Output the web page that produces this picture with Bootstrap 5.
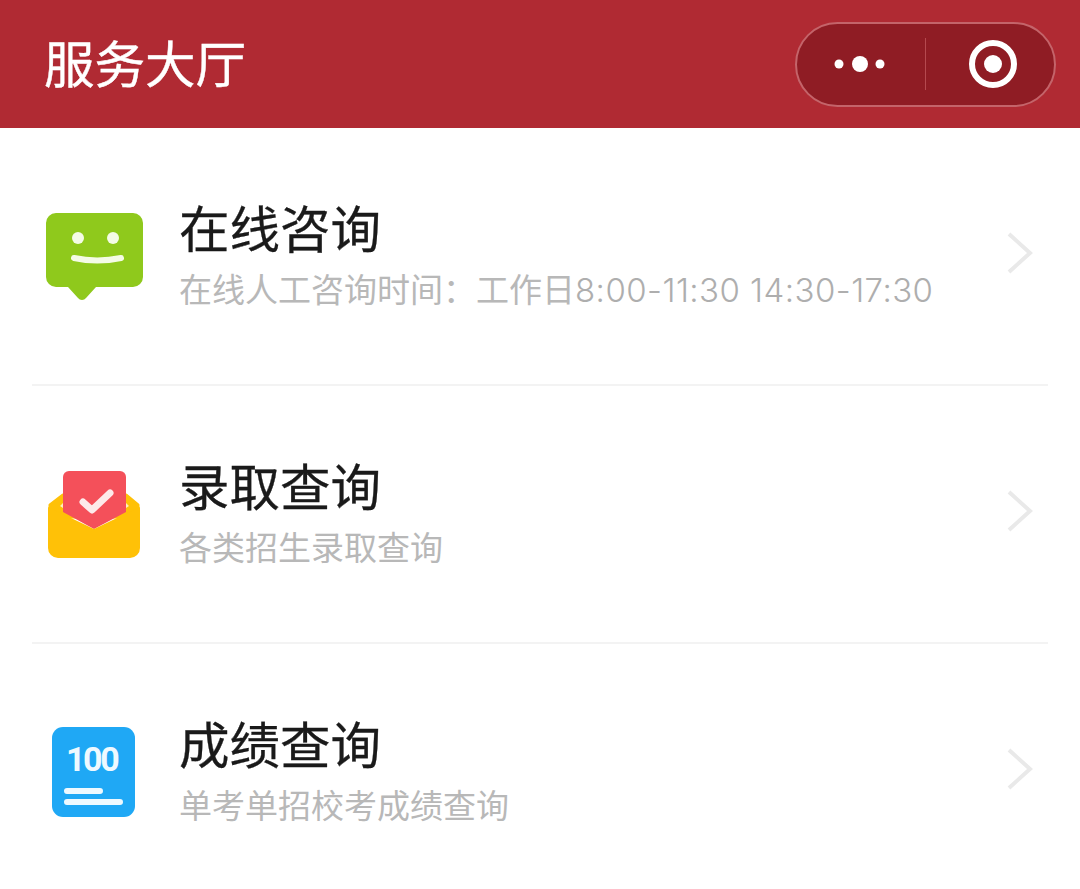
<!DOCTYPE html>
<html lang="zh-CN">
<head>
  <meta charset="UTF-8" />
  <meta name="viewport" content="width=device-width, initial-scale=1.0"/>
  <title>服务大厅</title>
  <link rel="stylesheet" href="https://cdn.jsdelivr.net/npm/bootstrap@5.3.0/dist/css/bootstrap.min.css"/>
  <style>
    body {
      background: #fff;
      font-family: Inter, "Noto Sans CJK SC", sans-serif;
      overflow: hidden;
    }

    .hall-bar {
      height: 128px;
      padding: 0 24px 0 44px;
      background: #b02a33;
      color: #fff;
    }

    .hall-bar h1 {
      font-size: 50.5px;
      font-weight: 400;
      line-height: 1;
      margin: 2px 0 0;
      -webkit-text-stroke: 0.4px #fff;
    }

    .capsule {
      width: 261px;
      height: 85px;
      background: #8f1c24;
      border: 2px solid #c4646a;
      border-radius: 43px;
    }

    .capsule-btn { flex: 1; }
    .capsule-btn-more { flex: 0 0 128px; padding-right: 2px; }
    .capsule-btn-close { padding-left: 6px; }
    .capsule-rule { width: 1px; height: 52px; background: #b5494f; }

    .svc-row {
      height: 258px;
      margin: 0 32px;
      padding-left: 12px;
      border-bottom: 2px solid #f3f3f3;
    }

    .svc-row:last-child { height: 256px; border-bottom: 0; }
    .svc-icon { width: 104px; height: 100px; margin-right: 31px; }

    .svc-title {
      font-size: 50.5px;
      line-height: 60px;
      color: #1a1a1a;
      -webkit-text-stroke: 0.3px #1a1a1a;
    }

    .svc-note {
      font-size: 33px;
      line-height: 44px;
      margin-top: 8px;
      color: #b8b8b8;
    }

    .svc-hours { font-weight: 300; letter-spacing: 0.45px; color: #aeaeae; }
    .svc-arrow { width: 30px; height: 44px; margin: 0 14px 6px 0; }
  </style>
</head>
<body>
  <header class="hall-bar d-flex align-items-center justify-content-between">
    <h1>服务大厅</h1>
    <div class="capsule d-flex align-items-center">
      <div class="capsule-btn capsule-btn-more d-flex justify-content-center">
        <svg width="60" height="20" viewBox="0 0 60 20"><g fill="#fff"><circle cx="9" cy="10" r="4.5"/><circle cx="30" cy="10" r="8"/><circle cx="50" cy="10" r="4.5"/></g></svg>
      </div>
      <div class="capsule-rule"></div>
      <div class="capsule-btn capsule-btn-close d-flex justify-content-center">
        <svg width="54" height="54" viewBox="0 0 54 54"><circle cx="27" cy="27" r="21" fill="none" stroke="#fff" stroke-width="6"/><circle cx="27" cy="27" r="9" fill="#fff"/></svg>
      </div>
    </div>
  </header>

  <main>
    <div class="svc-row d-flex align-items-center">
      <!-- speech bubble with a smile -->
      <svg class="svc-icon flex-shrink-0" viewBox="44 206 104 100">
        <path d="M56 213h77a10 10 0 0 1 10 10v54a10 10 0 0 1-10 10H96l-10 11a5 5 0 0 1-8 0l-10-11H56a10 10 0 0 1-10-10v-54a10 10 0 0 1 10-10z" fill="#8fc91c"/>
        <circle cx="78" cy="238" r="6" fill="#f4fbe6"/>
        <circle cx="113" cy="238" r="6" fill="#f4fbe6"/>
        <path d="M74 258q23 5 47 0" fill="none" stroke="#f4fbe6" stroke-width="6" stroke-linecap="round"/>
      </svg>
      <div class="flex-grow-1">
        <div class="svc-title">在线咨询</div>
        <div class="svc-note">在线人工咨询时间：工作日<span class="svc-hours">8:00-11:30 14:30-17:30</span></div>
      </div>
      <svg class="svc-arrow flex-shrink-0" viewBox="0 0 30 44"><path d="M5 3l21 19L5 41" fill="none" stroke="#e9e9e9" stroke-width="4"/></svg>
    </div>

    <div class="svc-row d-flex align-items-center">
      <!-- open envelope with a red check card -->
      <svg class="svc-icon flex-shrink-0" viewBox="44 464 104 100">
        <path d="M50 505l13-10h63l12 10v12H50z" fill="#ffc107" stroke="#ffc107" stroke-width="3" stroke-linejoin="round"/>
        <path d="M60 506l3-3v5zM129 506l-3-3v5z" fill="#fff0bd"/>
        <path d="M69 471h51a6 6 0 0 1 6 6v35l-32 17-31-17v-35a6 6 0 0 1 6-6z" fill="#f4505a"/>
        <path d="M48 507l46 22 46-22v41a10 10 0 0 1-10 10H58a10 10 0 0 1-10-10z" fill="#ffc107"/>
        <path d="M83 502l9 8 18-17" fill="none" stroke="#fdeaea" stroke-width="7" stroke-linecap="round" stroke-linejoin="round"/>
      </svg>
      <div class="flex-grow-1">
        <div class="svc-title">录取查询</div>
        <div class="svc-note">各类招生录取查询</div>
      </div>
      <svg class="svc-arrow flex-shrink-0" viewBox="0 0 30 44"><path d="M5 3l21 19L5 41" fill="none" stroke="#e9e9e9" stroke-width="4"/></svg>
    </div>

    <div class="svc-row d-flex align-items-center">
      <!-- score sheet -->
      <svg class="svc-icon flex-shrink-0" viewBox="44 722 104 100">
        <rect x="52" y="727" width="83" height="90" rx="11" fill="#1fa8f5"/>
        <text x="66" y="771" font-family="Roboto, sans-serif" font-weight="700" font-size="34" letter-spacing="-2.4" fill="#eef9ff">100</text>
        <path d="M67 791h33M67 802h53" stroke="#eef9ff" stroke-width="6" stroke-linecap="round"/>
      </svg>
      <div class="flex-grow-1">
        <div class="svc-title">成绩查询</div>
        <div class="svc-note">单考单招校考成绩查询</div>
      </div>
      <svg class="svc-arrow flex-shrink-0" viewBox="0 0 30 44"><path d="M5 3l21 19L5 41" fill="none" stroke="#e9e9e9" stroke-width="4"/></svg>
    </div>
  </main>
</body>
</html>
